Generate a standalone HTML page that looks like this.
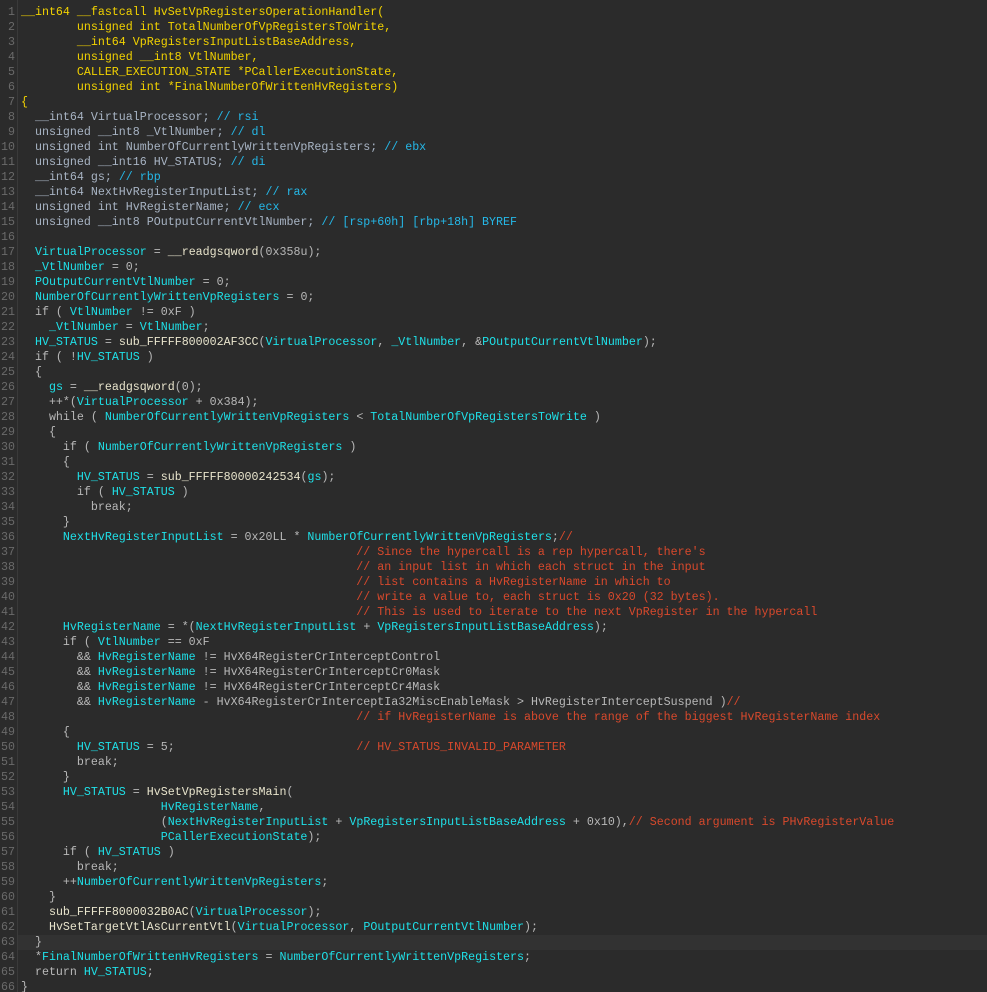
<!DOCTYPE html>
<html><head><meta charset="utf-8"><style>
html,body{margin:0;padding:0;background:#2b2b2b;width:987px;height:992px;overflow:hidden}
#w{position:relative;padding-top:5px;font-family:"Liberation Mono",monospace;font-size:11.65px;line-height:15px;color:#b8b8b8}
.l{height:15px;position:relative}
.n{position:absolute;left:0;width:15px;text-align:right;color:#6a6a6a}
.t{position:absolute;left:21px;white-space:pre}
.h{background:#323232;left:18px;right:0;position:absolute;top:0;height:15px}
#g{position:absolute;left:17px;top:0;width:1px;height:992px;background:#3a3a3a}
.y{color:#f2d200}.c{color:#1fe0e8}.d{color:#a8b4c4}.k{color:#25b8e8}.r{color:#d8492c}.f{color:#e8e4cc}
</style></head><body><div id="g"></div><div id="w">
<div class="l"><span class="n">1</span><span class="t y">__int64 __fastcall HvSetVpRegistersOperationHandler(</span></div>
<div class="l"><span class="n">2</span><span class="t y">        unsigned int TotalNumberOfVpRegistersToWrite,</span></div>
<div class="l"><span class="n">3</span><span class="t y">        __int64 VpRegistersInputListBaseAddress,</span></div>
<div class="l"><span class="n">4</span><span class="t y">        unsigned __int8 VtlNumber,</span></div>
<div class="l"><span class="n">5</span><span class="t y">        CALLER_EXECUTION_STATE *PCallerExecutionState,</span></div>
<div class="l"><span class="n">6</span><span class="t y">        unsigned int *FinalNumberOfWrittenHvRegisters)</span></div>
<div class="l"><span class="n">7</span><span class="t y">{</span></div>
<div class="l"><span class="n">8</span><span class="t d">  __int64 VirtualProcessor; <span class="k">// rsi</span></span></div>
<div class="l"><span class="n">9</span><span class="t d">  unsigned __int8 _VtlNumber; <span class="k">// dl</span></span></div>
<div class="l"><span class="n">10</span><span class="t d">  unsigned int NumberOfCurrentlyWrittenVpRegisters; <span class="k">// ebx</span></span></div>
<div class="l"><span class="n">11</span><span class="t d">  unsigned __int16 HV_STATUS; <span class="k">// di</span></span></div>
<div class="l"><span class="n">12</span><span class="t d">  __int64 gs; <span class="k">// rbp</span></span></div>
<div class="l"><span class="n">13</span><span class="t d">  __int64 NextHvRegisterInputList; <span class="k">// rax</span></span></div>
<div class="l"><span class="n">14</span><span class="t d">  unsigned int HvRegisterName; <span class="k">// ecx</span></span></div>
<div class="l"><span class="n">15</span><span class="t d">  unsigned __int8 POutputCurrentVtlNumber; <span class="k">// [rsp+60h] [rbp+18h] BYREF</span></span></div>
<div class="l"><span class="n">16</span><span class="t"></span></div>
<div class="l"><span class="n">17</span><span class="t">  <span class="c">VirtualProcessor</span> = <span class="f">__readgsqword</span>(0x358u);</span></div>
<div class="l"><span class="n">18</span><span class="t">  <span class="c">_VtlNumber</span> = 0;</span></div>
<div class="l"><span class="n">19</span><span class="t">  <span class="c">POutputCurrentVtlNumber</span> = 0;</span></div>
<div class="l"><span class="n">20</span><span class="t">  <span class="c">NumberOfCurrentlyWrittenVpRegisters</span> = 0;</span></div>
<div class="l"><span class="n">21</span><span class="t">  if ( <span class="c">VtlNumber</span> != 0xF )</span></div>
<div class="l"><span class="n">22</span><span class="t">    <span class="c">_VtlNumber</span> = <span class="c">VtlNumber</span>;</span></div>
<div class="l"><span class="n">23</span><span class="t">  <span class="c">HV_STATUS</span> = <span class="f">sub_FFFFF800002AF3CC</span>(<span class="c">VirtualProcessor</span>, <span class="c">_VtlNumber</span>, &amp;<span class="c">POutputCurrentVtlNumber</span>);</span></div>
<div class="l"><span class="n">24</span><span class="t">  if ( !<span class="c">HV_STATUS</span> )</span></div>
<div class="l"><span class="n">25</span><span class="t">  {</span></div>
<div class="l"><span class="n">26</span><span class="t">    <span class="c">gs</span> = <span class="f">__readgsqword</span>(0);</span></div>
<div class="l"><span class="n">27</span><span class="t">    ++*(<span class="c">VirtualProcessor</span> + 0x384);</span></div>
<div class="l"><span class="n">28</span><span class="t">    while ( <span class="c">NumberOfCurrentlyWrittenVpRegisters</span> &lt; <span class="c">TotalNumberOfVpRegistersToWrite</span> )</span></div>
<div class="l"><span class="n">29</span><span class="t">    {</span></div>
<div class="l"><span class="n">30</span><span class="t">      if ( <span class="c">NumberOfCurrentlyWrittenVpRegisters</span> )</span></div>
<div class="l"><span class="n">31</span><span class="t">      {</span></div>
<div class="l"><span class="n">32</span><span class="t">        <span class="c">HV_STATUS</span> = <span class="f">sub_FFFFF80000242534</span>(<span class="c">gs</span>);</span></div>
<div class="l"><span class="n">33</span><span class="t">        if ( <span class="c">HV_STATUS</span> )</span></div>
<div class="l"><span class="n">34</span><span class="t">          break;</span></div>
<div class="l"><span class="n">35</span><span class="t">      }</span></div>
<div class="l"><span class="n">36</span><span class="t">      <span class="c">NextHvRegisterInputList</span> = 0x20LL * <span class="c">NumberOfCurrentlyWrittenVpRegisters</span>;<span class="r">//</span></span></div>
<div class="l"><span class="n">37</span><span class="t r">                                                // Since the hypercall is a rep hypercall, there's</span></div>
<div class="l"><span class="n">38</span><span class="t r">                                                // an input list in which each struct in the input</span></div>
<div class="l"><span class="n">39</span><span class="t r">                                                // list contains a HvRegisterName in which to</span></div>
<div class="l"><span class="n">40</span><span class="t r">                                                // write a value to, each struct is 0x20 (32 bytes).</span></div>
<div class="l"><span class="n">41</span><span class="t r">                                                // This is used to iterate to the next VpRegister in the hypercall</span></div>
<div class="l"><span class="n">42</span><span class="t">      <span class="c">HvRegisterName</span> = *(<span class="c">NextHvRegisterInputList</span> + <span class="c">VpRegistersInputListBaseAddress</span>);</span></div>
<div class="l"><span class="n">43</span><span class="t">      if ( <span class="c">VtlNumber</span> == 0xF</span></div>
<div class="l"><span class="n">44</span><span class="t">        &amp;&amp; <span class="c">HvRegisterName</span> != HvX64RegisterCrInterceptControl</span></div>
<div class="l"><span class="n">45</span><span class="t">        &amp;&amp; <span class="c">HvRegisterName</span> != HvX64RegisterCrInterceptCr0Mask</span></div>
<div class="l"><span class="n">46</span><span class="t">        &amp;&amp; <span class="c">HvRegisterName</span> != HvX64RegisterCrInterceptCr4Mask</span></div>
<div class="l"><span class="n">47</span><span class="t">        &amp;&amp; <span class="c">HvRegisterName</span> - HvX64RegisterCrInterceptIa32MiscEnableMask &gt; HvRegisterInterceptSuspend )<span class="r">//</span></span></div>
<div class="l"><span class="n">48</span><span class="t r">                                                // if HvRegisterName is above the range of the biggest HvRegisterName index</span></div>
<div class="l"><span class="n">49</span><span class="t">      {</span></div>
<div class="l"><span class="n">50</span><span class="t">        <span class="c">HV_STATUS</span> = 5;                          <span class="r">// HV_STATUS_INVALID_PARAMETER</span></span></div>
<div class="l"><span class="n">51</span><span class="t">        break;</span></div>
<div class="l"><span class="n">52</span><span class="t">      }</span></div>
<div class="l"><span class="n">53</span><span class="t">      <span class="c">HV_STATUS</span> = <span class="f">HvSetVpRegistersMain</span>(</span></div>
<div class="l"><span class="n">54</span><span class="t">                    <span class="c">HvRegisterName</span>,</span></div>
<div class="l"><span class="n">55</span><span class="t">                    (<span class="c">NextHvRegisterInputList</span> + <span class="c">VpRegistersInputListBaseAddress</span> + 0x10),<span class="r">// Second argument is PHvRegisterValue</span></span></div>
<div class="l"><span class="n">56</span><span class="t">                    <span class="c">PCallerExecutionState</span>);</span></div>
<div class="l"><span class="n">57</span><span class="t">      if ( <span class="c">HV_STATUS</span> )</span></div>
<div class="l"><span class="n">58</span><span class="t">        break;</span></div>
<div class="l"><span class="n">59</span><span class="t">      ++<span class="c">NumberOfCurrentlyWrittenVpRegisters</span>;</span></div>
<div class="l"><span class="n">60</span><span class="t">    }</span></div>
<div class="l"><span class="n">61</span><span class="t">    <span class="f">sub_FFFFF8000032B0AC</span>(<span class="c">VirtualProcessor</span>);</span></div>
<div class="l"><span class="n">62</span><span class="t">    <span class="f">HvSetTargetVtlAsCurrentVtl</span>(<span class="c">VirtualProcessor</span>, <span class="c">POutputCurrentVtlNumber</span>);</span></div>
<div class="l"><span class="h"></span><span class="n">63</span><span class="t">  }</span></div>
<div class="l"><span class="n">64</span><span class="t">  *<span class="c">FinalNumberOfWrittenHvRegisters</span> = <span class="c">NumberOfCurrentlyWrittenVpRegisters</span>;</span></div>
<div class="l"><span class="n">65</span><span class="t">  return <span class="c">HV_STATUS</span>;</span></div>
<div class="l"><span class="n">66</span><span class="t">}</span></div>
</div></body></html>
